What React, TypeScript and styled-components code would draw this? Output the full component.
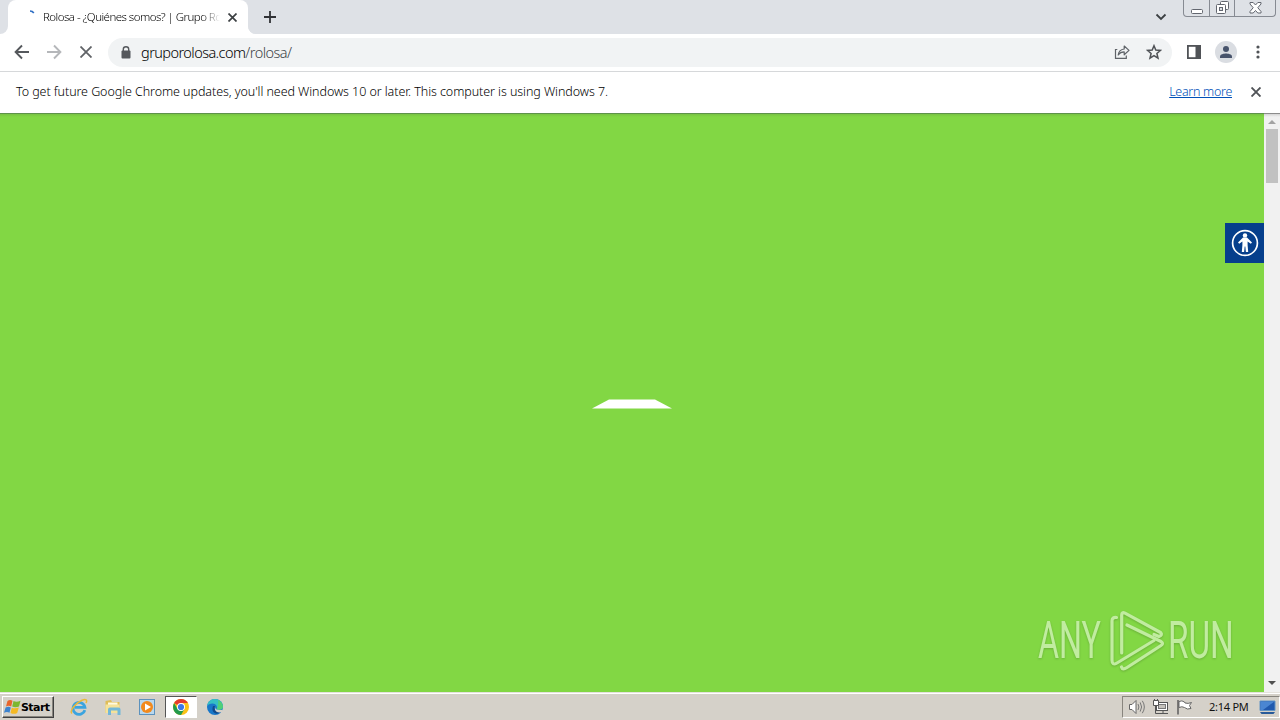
import React from "react";
import styled, { createGlobalStyle } from "styled-components";

const App = () => {
  return (
    <Screen>
      <GlobalStyle />
      <TabStrip>
        <StripEdge />
        <Tab>
          <Spinner width="16" height="16" viewBox="0 0 16 16">
            <path d="M6 2Q8.5 2 9.8 4" stroke="#2f6fc4" strokeWidth="1.6" fill="none" />
          </Spinner>
          <TabTitle>Rolosa - ¿Quiénes somos? | Grupo Ro</TabTitle>
          <CloseIcon size={9} color="#3c4043" weight={1.7} />
        </Tab>
        <NewTab>
          <svg width="12" height="12" viewBox="0 0 12 12">
            <path d="M6 0V12M0 6H12" stroke="#303236" strokeWidth="1.8" />
          </svg>
        </NewTab>
        <TabSearch width="12" height="8" viewBox="0 0 12 8">
          <path d="M1.5 1.5L6 6L10.5 1.5" stroke="#3c4043" strokeWidth="1.8" fill="none" />
        </TabSearch>
        <WindowControls>
          <WindowButton $width={25}>
            <svg width="12" height="5" viewBox="0 0 12 5">
              <rect x="0.5" y="0.5" width="11" height="4" rx="1" fill="#fff" stroke="#62666f" />
            </svg>
          </WindowButton>
          <WindowButton $width={25}>
            <svg width="13" height="13" viewBox="0 0 13 13">
              <rect x="4.5" y="0.5" width="8" height="8" rx="1" fill="#fff" stroke="#62666f" />
              <rect x="0.5" y="3.5" width="9" height="9" rx="1" fill="#fff" stroke="#62666f" />
              <rect x="3.5" y="6.5" width="3" height="3" fill="#dee1e6" stroke="#62666f" />
            </svg>
          </WindowButton>
          <WindowButton $width={41}>
            <svg width="13" height="12" viewBox="0 0 13 12">
              <path
                d="M1 .5H4.2L6.5 3L8.8 .5H12V2L8.8 5.7L12 9.5V11H8.8L6.5 8.5L4.2 11H1V9.5L4.2 5.7L1 2Z"
                fill="#fff"
                stroke="#62666f"
              />
            </svg>
          </WindowButton>
        </WindowControls>
      </TabStrip>

      <Toolbar>
        <NavButtons>
          <svg width="16" height="16" viewBox="0 0 16 16">
            <path d="M15 8H2M8 1.5L1.6 8L8 14.5" stroke="#55585c" strokeWidth="1.9" fill="none" />
          </svg>
          <svg width="16" height="16" viewBox="0 0 16 16">
            <path d="M1 8H14M8 1.5L14.4 8L8 14.5" stroke="#b5b7ba" strokeWidth="1.9" fill="none" />
          </svg>
          <CloseIcon size={12} color="#606367" weight={1.8} />
        </NavButtons>
        <AddressBar>
          <svg width="10" height="13" viewBox="0 0 10 13">
            <rect x="0.5" y="4.5" width="9" height="8" rx="1" fill="#55585c" />
            <path d="M2.3 5V3.2A2.7 2.4 0 0 1 7.7 3.2V5" stroke="#55585c" strokeWidth="1.4" fill="none" />
          </svg>
          <Url>
            gruporolosa.com<span>/rolosa/</span>
          </Url>
          <svg width="16" height="16" viewBox="0 0 16 16">
            <path d="M3.3 5.5H1.5V14.3H12.3V11.5" stroke="#5f6368" strokeWidth="1.2" fill="none" />
            <path
              d="M4.2 11C4.6 7.5 6.6 5.4 10.2 5V2L15 6.4L10.2 10.8V7.9C7.6 7.9 5.7 8.8 4.2 11Z"
              stroke="#5f6368"
              strokeWidth="1.2"
              strokeLinejoin="round"
              fill="none"
            />
          </svg>
          <svg width="16" height="16" viewBox="0 0 16 16">
            <path
              d="M8 1.7L9.8 6L14.5 6.4L10.9 9.5L12 14.1L8 11.6L4 14.1L5.1 9.5L1.5 6.4L6.2 6Z"
              stroke="#4f5256"
              strokeWidth="1.5"
              fill="none"
            />
          </svg>
        </AddressBar>
        <ToolbarActions>
          <svg width="14" height="14" viewBox="0 0 14 14">
            <rect x="0.9" y="0.9" width="12.2" height="12.2" stroke="#505357" strokeWidth="1.8" fill="none" />
            <rect x="8.5" y="1" width="5" height="12" fill="#505357" />
          </svg>
          <Avatar>
            <svg width="12" height="12" viewBox="0 0 12 12">
              <circle cx="6" cy="3" r="3" fill="#47536b" />
              <path d="M0 12V10.5C0 8.3 4 7.5 6 7.5S12 8.3 12 10.5V12Z" fill="#47536b" />
            </svg>
          </Avatar>
          <svg width="4" height="14" viewBox="0 0 4 14">
            <circle cx="2" cy="2" r="1.6" fill="#505357" />
            <circle cx="2" cy="7" r="1.6" fill="#505357" />
            <circle cx="2" cy="12" r="1.6" fill="#505357" />
          </svg>
        </ToolbarActions>
      </Toolbar>

      <InfoBar>
        <InfoText>
          To get future Google Chrome updates, you'll need Windows 10 or later. This computer is
          using Windows 7.
        </InfoText>
        <LearnMore>Learn more</LearnMore>
        <CloseIcon size={10} color="#505357" weight={1.9} />
      </InfoBar>

      <Viewport>
        <Page>
          <Loader width="80" height="10" viewBox="0 0 80 10">
            <path d="M0 9.5L17 .5H63L80 9.5Z" fill="#fff" />
          </Loader>
          <AccessButton>
            <svg width="28" height="28" viewBox="0 0 28 28">
              <circle cx="14" cy="14" r="12.4" stroke="#fff" strokeWidth="1.7" fill="none" />
              <circle cx="14" cy="6.4" r="2.2" fill="#fff" />
              <path
                d="M12 8.5H16L21 13.6L19.8 14.8L16.6 12.4V16L17.2 23H14.9L14.3 17.5H13.7L13.1 23H10.8L11.4 16V12.4L8.2 14.8L7 13.6Z"
                fill="#fff"
              />
            </svg>
          </AccessButton>
          <Watermark>
            <WatermarkText>ANY</WatermarkText>
            <svg width="56" height="62" viewBox="0 0 56 62">
              <g
                fill="none"
                stroke="#dcf5c8"
                strokeWidth="3.2"
                strokeLinejoin="round"
                strokeLinecap="round"
              >
                <path d="M8.5 7.5Q4 7 4 11V50Q4 56 9 53L46 30.5" />
                <path d="M13.7 43V5Q13.7 1.5 17 3.2L52.5 22.5Q55 25 51 26.5L46 24.5" />
                <path d="M19 15L53 31.5Q56 33.5 53 35.5L19 57.5Q14.5 60.5 13.5 57" />
              </g>
            </svg>
            <WatermarkText>RUN</WatermarkText>
          </Watermark>
        </Page>
        <ScrollBar>
          <svg width="8" height="4" viewBox="0 0 8 4">
            <path d="M0 4L4 0L8 4Z" fill="#a3a3a3" />
          </svg>
          <Thumb />
          <svg width="8" height="4" viewBox="0 0 8 4">
            <path d="M0 0L4 4L8 0Z" fill="#505050" />
          </svg>
        </ScrollBar>
      </Viewport>

      <Taskbar>
        <StartButton>
          <svg width="17" height="16" viewBox="0 0 17 16">
            <path d="M3.5 2Q6 0 8.5 1.8L7.2 7.4Q4.5 6 2 7.5Z" fill="#e8652c" />
            <path d="M9.5 2Q12.5 3.6 16.5 1.8L15 7.4Q11.5 9 8.2 7.5Z" fill="#7db72f" />
            <path d="M1.6 8.5Q4.5 7 6.8 8.5L5.5 13.8Q3 12.4 0 13.8Z" fill="#3d83cf" />
            <path d="M7.8 8.7Q11 10 14.8 8.5L13.2 14Q10 15.7 6.5 14Z" fill="#f4b924" />
          </svg>
          <span>Start</span>
        </StartButton>
        <QuickLaunch>
          <TaskItem>
            <svg width="18" height="18" viewBox="0 0 18 18">
              <path
                d="M14.8 12.2A6 6 0 1 1 15 9.4H4.8"
                stroke="#3ba4df"
                strokeWidth="2.7"
                fill="none"
              />
              <path
                d="M2 15.5C-1 13 6 4.5 12 2.2C16 .7 17.6 2 16 5"
                stroke="#e9b93b"
                strokeWidth="1.5"
                fill="none"
              />
            </svg>
          </TaskItem>
          <TaskItem>
            <svg width="18" height="18" viewBox="0 0 18 18">
              <path d="M1.5 3L7 2L8 4H15.5V15H1.5Z" fill="#dfbd58" />
              <path d="M4 4.5H13.5V12H4Z" fill="#fffadf" />
              <path d="M1.5 6.5H15.5V15H1.5Z" fill="#f5e29a" />
              <path d="M4 17V11.5Q4 9.5 6 9.5H14.5Q16.5 9.5 16.5 11.5V17H13.5V12.5H7V17Z" fill="#72b7d8" />
            </svg>
          </TaskItem>
          <TaskItem>
            <svg width="18" height="18" viewBox="0 0 18 18">
              <rect x="1.5" y="1.5" width="15" height="15" fill="#b9d8ee" stroke="#5c92bd" />
              <circle cx="9" cy="9" r="6" fill="#f28a1d" />
              <path d="M7 5.5L13 9L7 12.5Z" fill="#fff" />
            </svg>
          </TaskItem>
          <TaskItem $active>
            <svg width="18" height="18" viewBox="0 0 18 18">
              <circle cx="9" cy="9" r="8" fill="#fbc116" />
              <path d="M9 9L2.1 5A8 8 0 0 1 15.9 5H9Z" fill="#e33b2e" />
              <path d="M9 9L5.5 11L2.1 5A8 8 0 0 0 9 17L12.5 11Z" fill="#229a4c" />
              <circle cx="9" cy="9" r="4" fill="#fff" />
              <circle cx="9" cy="9" r="3.1" fill="#3b78e7" />
            </svg>
          </TaskItem>
          <TaskItem>
            <svg width="18" height="18" viewBox="0 0 18 18">
              <circle cx="9" cy="9" r="8" fill="#1877c9" />
              <path d="M1.2 8C2 2.5 6 1 9 1C14 1 17 5 17 8.5C17 12 12 12.5 10.5 11C12 9 10 5.5 6.5 5.5C4 5.5 2 6.5 1.2 8Z" fill="#35bfc4" />
              <path d="M12 2C16 4 17 7 17 9C16.5 12 12 12.5 10.5 11C12 10 12.5 5 12 2Z" fill="#50cf78" />
              <path d="M7 8Q5 13 9 15.3Q12 16.5 15.5 13.5Q11 14.5 9 12Q7.6 10 9 8Z" fill="#114a8c" />
              <path d="M9.4 8.5Q8.5 13 16.5 11.8L17 14Q10 15.5 9 11.5Z" fill="#d5d1ca" />
            </svg>
          </TaskItem>
        </QuickLaunch>
        <Tray>
          <svg width="18" height="16" viewBox="0 0 18 16">
            <path d="M1.5 5.5H4L8 1.5V14.5L4 10.5H1.5Z" fill="#fff" stroke="#666" />
            <path
              d="M10 5Q11.8 8 10 11M12.2 3.4Q15 8 12.2 12.6M14.3 1.8Q18.4 8 14.3 14.2"
              stroke="#777"
              fill="none"
            />
          </svg>
          <svg width="17" height="16" viewBox="0 0 17 16">
            <rect x="3.5" y="3.5" width="11" height="8" fill="#fff" stroke="#555" />
            <rect x="5.5" y="5.5" width="7" height="4" fill="#c5c2bc" stroke="#777" />
            <path d="M6 14.5H15M10 12V14M2.5 6V14.5H7" stroke="#555" fill="none" />
            <path d="M.5 1.5H5.5V6.5H.5ZM1.5 0V2M4.5 0V2" stroke="#555" fill="#fff" />
          </svg>
          <svg width="17" height="16" viewBox="0 0 17 16">
            <path
              d="M2 2.5Q5 1 7.5 3L8 4Q11 5 14.5 3.5L12.5 6.5L14 9.5Q10 11 7.5 8.5Q5 7 2 8.5Z"
              fill="#fff"
              stroke="#666"
            />
            <path d="M1 1V15.5" stroke="#555" strokeWidth="1.4" />
          </svg>
          <Clock>2:14 PM</Clock>
          <svg width="17" height="15" viewBox="0 0 17 15">
            <path d="M1 1H16V10.5H1Z" fill="#2059ae" stroke="#6394c4" />
            <path d="M1.5 1.5H15.5L4 10H1.5Z" fill="#4a86d2" />
            <path d="M1 12H16L14.5 14H2.5Z" fill="#285a99" />
          </svg>
        </Tray>
      </Taskbar>
    </Screen>
  );
};

export default App;

type CloseIconProps = {
  size: number;
  color: string;
  weight: number;
};

const CloseIcon = ({ size, color, weight }: CloseIconProps) => (
  <svg width={size} height={size} viewBox={`0 0 ${size} ${size}`}>
    <path
      d={`M.5 .5L${size - 0.5} ${size - 0.5}M${size - 0.5} .5L.5 ${size - 0.5}`}
      stroke={color}
      strokeWidth={weight}
    />
  </svg>
);

const GlobalStyle = createGlobalStyle`
  * {
    box-sizing: border-box;
  }
  body {
    margin: 0;
    overflow: hidden;
  }
  svg {
    display: block;
    flex-shrink: 0;
  }
`;

const Screen = styled.div`
  display: flex;
  flex-direction: column;
  width: 1280px;
  height: 720px;
  background: #fff;
  font-family: "Noto Sans", "Open Sans", sans-serif;
  font-weight: 300;
  white-space: nowrap;
`;

const TabStrip = styled.div`
  display: flex;
  height: 34px;
  background: #dee1e6;
`;

const StripEdge = styled.div`
  width: 8px;
  background: #fff;

  &::before {
    content: "";
    display: block;
    height: 34px;
    background: #dee1e6;
    border-bottom-right-radius: 8px;
  }
`;

const Tab = styled.div`
  display: flex;
  align-items: center;
  width: 240px;
  height: 34px;
  padding-left: 16px;
  background: #fff;
  border-radius: 8px 8px 0 0;
`;

const Spinner = styled.svg`
  align-self: flex-start;
  margin-top: 9px;
`;

const TabTitle = styled.div`
  width: 178px;
  margin: 0 7px 0 3px;
  color: #000;
  font-size: 11.5px;
  line-height: 16px;
  letter-spacing: -0.54px;
  mask-image: linear-gradient(90deg, #000 160px, transparent 177px);
`;

const NewTab = styled.div`
  display: flex;
  align-items: center;
  width: 40px;
  padding-left: 16px;
  background: linear-gradient(#dee1e6, #dee1e6);
  border-bottom-left-radius: 8px;
  box-shadow: -8px 8px 0 0 #fff;
  clip-path: inset(0);
`;

const TabSearch = styled.svg`
  margin: 13px 16px 0 auto;
`;

const WindowControls = styled.div`
  display: flex;
  height: 17px;
  margin-right: 4px;
  border: 1px solid #868a92;
  border-top: 0;
  border-radius: 0 0 4px 4px;
`;

const WindowButton = styled.div<{ $width: number }>`
  display: flex;
  justify-content: center;
  align-items: flex-end;
  width: ${({ $width }) => $width}px;
  padding-bottom: 2px;

  & + & {
    border-left: 1px solid #868a92;
  }
`;

const Toolbar = styled.div`
  display: flex;
  align-items: center;
  height: 38px;
  padding-bottom: 1px;
  border-bottom: 1px solid #d6d8da;
`;

const NavButtons = styled.div`
  display: flex;
  align-items: center;
  gap: 16px;
  width: 108px;
  padding-left: 14px;

  svg:last-child {
    margin-left: 2px;
  }
`;

const AddressBar = styled.div`
  display: flex;
  align-items: center;
  gap: 16px;
  width: 1064px;
  height: 29px;
  padding: 0 10px 0 13px;
  border-radius: 15px;
  background: #f1f3f4;
`;

const Url = styled.div`
  flex: 1;
  margin: 0 0 0 -6px;
  color: #000;
  font-size: 14.5px;
  line-height: 20px;
  letter-spacing: -0.56px;

  span {
    color: #404347;
  }
`;

const ToolbarActions = styled.div`
  display: flex;
  align-items: center;
  padding-left: 15px;
`;

const Avatar = styled.div`
  display: flex;
  justify-content: center;
  align-items: center;
  width: 22px;
  height: 22px;
  margin: 0 19px 0 14px;
  border-radius: 50%;
  background: #dadde2;
`;

const InfoBar = styled.div`
  display: flex;
  align-items: center;
  height: 41px;
  padding: 0 19px 1px 16px;
`;

const InfoText = styled.div`
  flex: 1;
  color: #000;
  font-size: 12.5px;
  line-height: 18px;
  letter-spacing: -0.07px;
`;

const LearnMore = styled.a`
  margin-right: 19px;
  color: #0050b8;
  font-size: 12.5px;
  line-height: 18px;
  letter-spacing: -0.3px;
  text-decoration: underline;
`;

const Viewport = styled.div`
  display: flex;
  flex: 1;
  background: linear-gradient(#8c8c8c 1px, #d5d5d5 1px, #f1f1f1 4px);
`;

const Page = styled.div`
  position: relative;
  display: flex;
  flex: 1;
  justify-content: center;
  align-items: flex-start;
  background: linear-gradient(#5e934a 1px, #78c243 1px, #82d744 4px);
`;

const Loader = styled.svg`
  margin-top: 286px;
`;

const AccessButton = styled.div`
  position: absolute;
  top: 110px;
  right: 0;
  display: flex;
  justify-content: center;
  align-items: center;
  width: 39px;
  height: 40px;
  background: #063f8c;
`;

const Watermark = styled.div`
  position: absolute;
  top: 497px;
  left: 1038px;
  display: flex;
  align-items: center;
  opacity: 0.7;
  filter: drop-shadow(0 1px 1px rgba(50, 90, 30, 0.45));
`;

const WatermarkText = styled.div`
  width: 70px;
  color: #dcf5c8;
  font-family: "Roboto", sans-serif;
  font-size: 52px;
  font-weight: 400;
  line-height: 62px;
  transform: scaleX(0.62);
  transform-origin: left;

  &:last-child {
    width: 66px;
    margin-left: 4px;
    transform: scaleX(0.64);
  }
`;

const ScrollBar = styled.div`
  display: flex;
  flex-direction: column;
  align-items: center;
  width: 16px;
  padding: 7px 0;

  svg:last-child {
    margin-top: auto;
  }
`;

const Thumb = styled.div`
  width: 12px;
  height: 54px;
  margin-top: 5px;
  background: #c1c1c1;
`;

const Taskbar = styled.div`
  display: flex;
  align-items: center;
  height: 28px;
  padding: 1px 0 0 2px;
  background: #d5d1c9;
  border-top: 1px solid #e5e2dc;
  box-shadow: inset 0 1px 0 #fff;
`;

const StartButton = styled.div`
  display: flex;
  align-items: center;
  width: 52px;
  height: 22px;
  padding-left: 1px;
  border: 1px solid;
  border-color: #fff #404040 #404040 #fff;
  box-shadow: inset -1px -1px 0 #88857e;
  color: #000;
  font-family: "DejaVu Sans", sans-serif;
  font-size: 11px;
  font-weight: bold;
  letter-spacing: -0.55px;
`;

const QuickLaunch = styled.div`
  display: flex;
  gap: 2px;
  margin-left: 9px;
`;

const TaskItem = styled.div<{ $active?: boolean }>`
  display: flex;
  justify-content: center;
  align-items: center;
  width: 32px;
  height: 22px;
  border: 1px solid;
  border-color: ${({ $active }) => ($active ? "#555 #fff #fff #555" : "transparent")};
  background: ${({ $active }) => ($active ? "#fff" : "transparent")};
`;

const Tray = styled.div`
  display: flex;
  align-items: center;
  gap: 7px;
  width: 158px;
  height: 22px;
  margin-left: auto;
  padding-left: 5px;
  border: 1px solid;
  border-color: #88857e #fff #fff #88857e;
`;

const Clock = styled.div`
  width: 42px;
  margin: -2px 1px 0 8px;
  color: #111;
  font-size: 11px;
  font-weight: 400;
  letter-spacing: -0.25px;
`;
